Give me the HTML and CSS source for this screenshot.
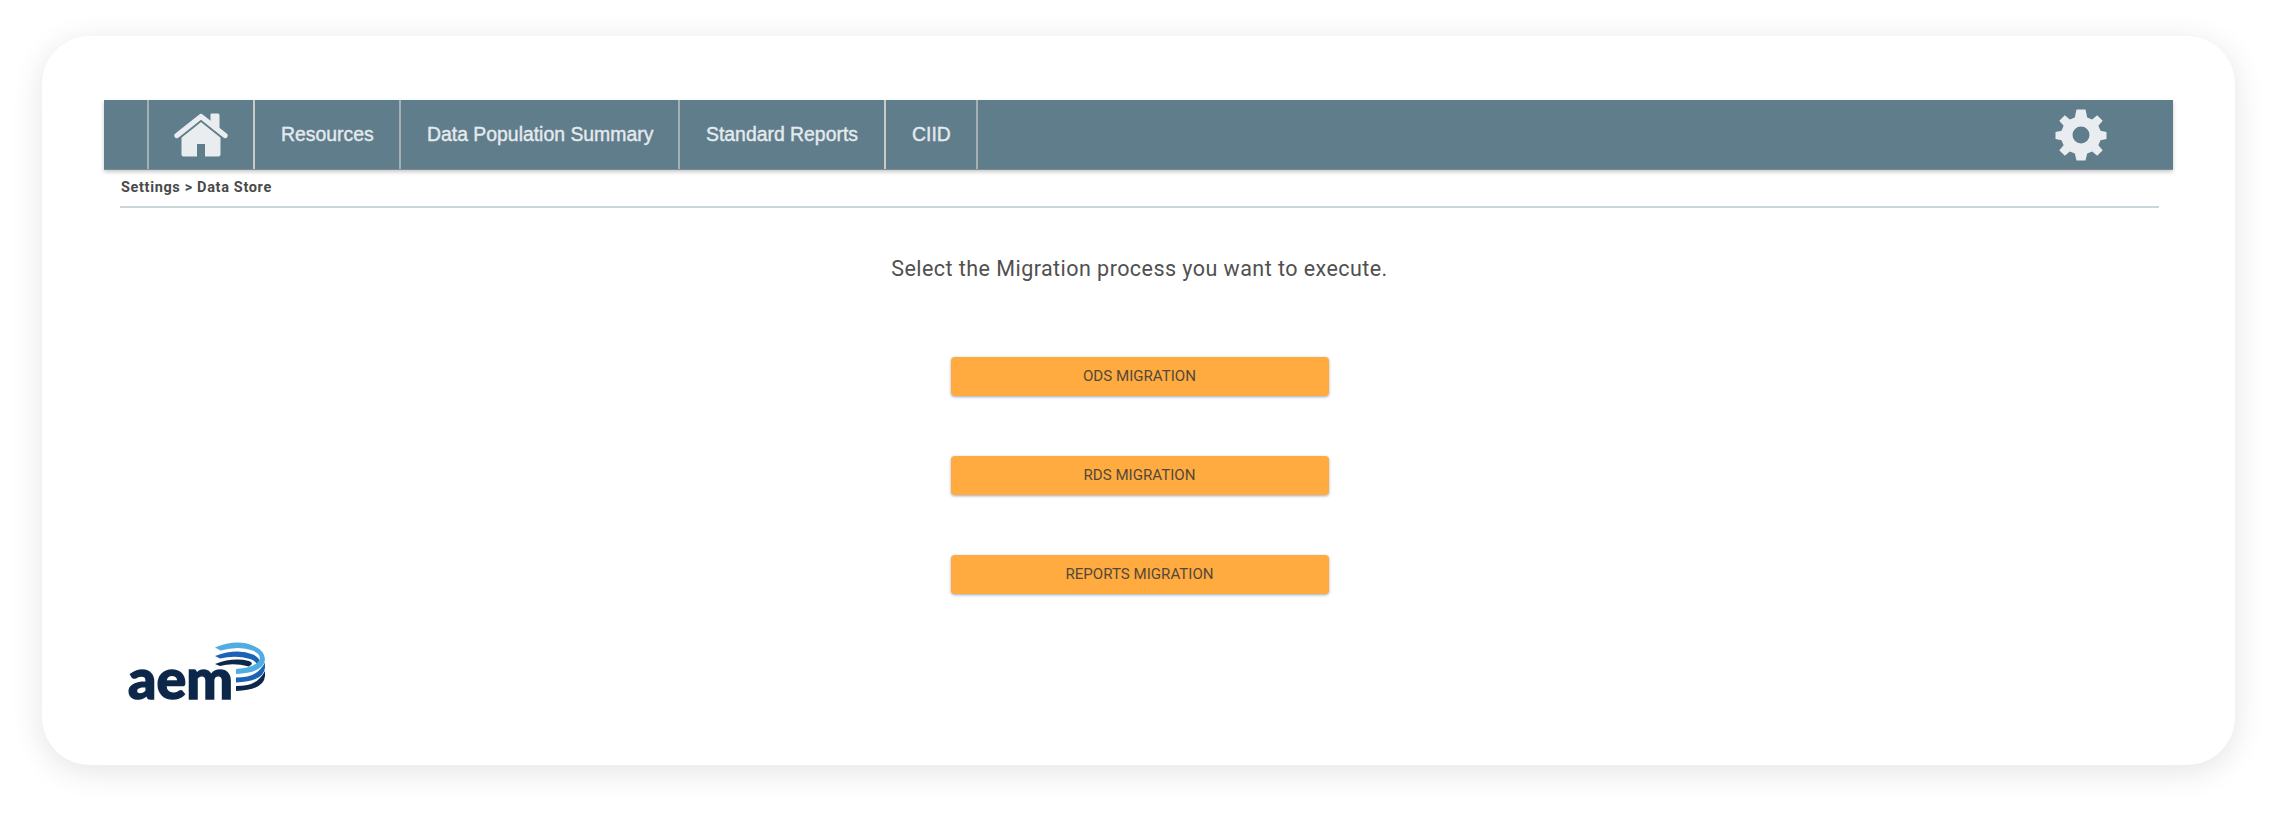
FILE: index.html
```
<!DOCTYPE html>
<html lang="en">
<head>
<meta charset="utf-8">
<title>Data Store</title>
<link rel="stylesheet" href="styles.css">
</head>
<body>
<main class="card">
  <nav class="navbar">
    <a class="nav-item nav-home" aria-label="Home">
      <svg class="home-icon" viewBox="0 0 54 44">
        <path d="M3 22.500 27 3.500 51 22.500" fill="none" stroke="#e9edf0" stroke-width="5.400" stroke-linejoin="round" stroke-linecap="round"/>
        <path d="M37.500 .5H44q1.500 0 1.500 1.500V18l-9-7V1.500q0-1 1-1z" fill="#e9edf0"/>
        <path d="M27 8.500 46.500 24v17.500q0 2-2 2H31V31h-8v12.500H9.500q-2 0-2-2V24z" fill="#e9edf0"/>
        <path d="M6 25 27 8.200 48 25" fill="none" stroke="#607d8b" stroke-width="1.400"/>
      </svg>
    </a>
    <a class="nav-item nav-resources"><span>Resources</span></a>
    <a class="nav-item nav-summary"><span>Data Population Summary</span></a>
    <a class="nav-item nav-reports"><span>Standard Reports</span></a>
    <a class="nav-item nav-ciid"><span>CIID</span></a>
    <a class="nav-settings" aria-label="Settings">
      <svg class="gear-icon" viewBox="0 0 52 52">
        <path fill="#e9edf0" fill-rule="evenodd" d="M21.500 .5h9l1.700 8 5 2.100 5-4.300 5.500 5.500-4.300 5 2.100 5 6 1.200v7l-6 1.200-2.100 5 4.300 5-5.500 5.500-5-4.300-5 2.100-1.700 7h-9l-1.700-7-5-2.100-5 4.300-5.500-5.500 4.300-5-2.100-5-6-1.200v-7l6-1.200 2.100-5-4.300-5 5.500-5.500 5 4.300 5-2.100zM26 17.500a8.500 8.500 0 1 0 0 17 8.500 8.500 0 1 0 0-17z"/>
      </svg>
    </a>
  </nav>
  <div class="breadcrumb"><span>Settings &gt; Data Store</span></div>
  <section class="migration">
    <h1 class="prompt">Select the Migration process you want to execute.</h1>
    <button class="action">ODS MIGRATION</button>
    <button class="action">RDS MIGRATION</button>
    <button class="action">REPORTS MIGRATION</button>
  </section>
  <svg class="logo" viewBox="0 0 140 60">
    <text class="logo-text" x="0" y="57" textLength="105" lengthAdjust="spacingAndGlyphs">aem</text>
    <path fill="#0c2749" d="M87 22q18-7 34-3 3 1 3 3l-3 2.500q-16-4-29-.5zM108 44q17 0 24-8 3-3 5-7v5q-1 14-29 15z"/>
    <path fill="#1c62b5" d="M87 14q22-8 38-1.500 6 3 7 7l-3 2.500q-3-4-7-5-14-4-30-.5zM108 35.500q17 0 24-8 3-3 5-7v5q-1 14-29 15z"/>
    <path fill="#51ace2" d="M87 5.500Q109-3.500 126 4q11 5 11 13.500-1 13-29 14.500v-5q19-1 23.500-9 2-6-7-9.500-13-5-32 0z"/>
  </svg>
</main>
</body>
</html>
```
FILE: styles.css
```
* { box-sizing: border-box; }

body {
  margin: 0;
  height: 813px;
  padding: 36px 42px 0;
  background: #fff;
  overflow: hidden;
}

.card {
  height: 729px;
  padding: 64px 62px 0;
  border-radius: 48px;
  background: #fff;
  box-shadow: 0 6px 32px rgba(0, 0, 0, .11);
}

.navbar {
  display: flex;
  height: 70px;
  padding-left: 43px;
  background: #607d8b;
  border-bottom: 1px solid #7c8b92;
  box-shadow: 0 2px 4px rgba(0, 0, 0, .22);
  font: 19.400px "Liberation Sans", Arial, sans-serif;
  color: #e4eaee;
}

.nav-item {
  display: flex;
  align-items: center;
  padding-left: 26px;
  border-left: 2px solid #a5b0b3;
  white-space: nowrap;
}

.nav-item span { -webkit-text-stroke: .4px #e4eaee; }

.nav-home { width: 106px; padding-left: 25px; }
.nav-resources { width: 146px; border-left-color: #c9cbc4; }
.nav-summary { width: 279px; }
.nav-reports { width: 206px; }
.nav-ciid { width: 94px; border-left-color: #c9cbc4; border-right: 2px solid #a5b0b3; }

.home-icon { width: 54px; height: 44px; margin-top: 1px; }

.nav-settings { margin: 9px 66px 0 auto; }
.gear-icon { display: block; width: 52px; height: 52px; }

.breadcrumb {
  height: 38px;
  margin: 0 14px 0 16px;
  padding: 9px 0 0 1px;
  border-bottom: 2px solid #cbd5da;
  font: 700 14.500px/18px Roboto, sans-serif;
  letter-spacing: .65px;
  color: #4a4a4a;
}

.migration {
  display: flex;
  flex-direction: column;
  align-items: center;
  gap: 60px;
  padding: 46px 0 0 2px;
}

.prompt {
  margin: 0 0 14px;
  font: 400 21.500px/29px Roboto, sans-serif;
  letter-spacing: .45px;
  color: #505050;
}

.action {
  width: 378px;
  height: 39px;
  padding: 0 0 2px;
  border: 0;
  border-radius: 4px;
  background: #ffab40;
  box-shadow: 0 1px 3px rgba(40, 60, 90, .45);
  font: 400 15.100px Roboto, sans-serif;
  color: #54483a;
}

.logo {
  display: block;
  width: 140px;
  height: 60px;
  margin: 48px 0 0 24px;
  overflow: visible;
}

.logo-text {
  font: 900 55px/1 Lato, sans-serif;
  fill: #0c2749;
  stroke: #0c2749;
  stroke-width: 1.400px;
}
```
